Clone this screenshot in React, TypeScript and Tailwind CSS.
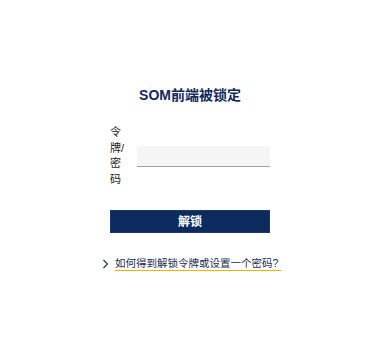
import React from 'react';

function Chevron() {
  return (
    <svg width="7" height="10" viewBox="0 0 7 10" className="shrink-0">
      <polyline points="1.5,1 5.5,5 1.5,9" fill="none" stroke="#1c2f57" strokeWidth="1.1" />
    </svg>
  );
}

export default function App() {
  return (
    <div className="min-h-screen bg-white font-['Liberation_Sans','Noto_Sans_CJK_SC',sans-serif]">
      <div className="ml-[110px] w-[160px] pt-[86px]">
        {/* Title */}
        <h1 className="text-center text-[14px] font-bold leading-[18px] text-[#13295a]">
          SOM前端被锁定
        </h1>

        {/* Token / password field */}
        <div className="mt-[21px] flex items-center gap-[8px]">
          <label className="w-[19px] shrink-0 text-[11px] leading-[15.5px] text-[#222]">
            令牌/密码
          </label>
          <input
            type="password"
            className="h-[21px] w-[133px] border-b border-[#a0a0a0] bg-[#f5f5f5] px-1 text-[11px] outline-none"
          />
        </div>

        {/* Submit */}
        <button className="mt-[23px] flex h-[23px] w-full items-center justify-center border border-[#1a3a70] bg-[#0b2a5e] text-[12px] font-bold text-white">
          解锁
        </button>

        {/* Help link */}
        <a className="-ml-[8px] mt-[24px] flex w-max items-center gap-[6px] text-[10.5px] leading-[13px] text-[#1d2b4c]">
          <Chevron />
          <span className="inline-block border-b border-[#f0b400] pr-[3px]">
            如何得到解锁令牌或设置一个密码?
          </span>
        </a>
      </div>
    </div>
  );
}
